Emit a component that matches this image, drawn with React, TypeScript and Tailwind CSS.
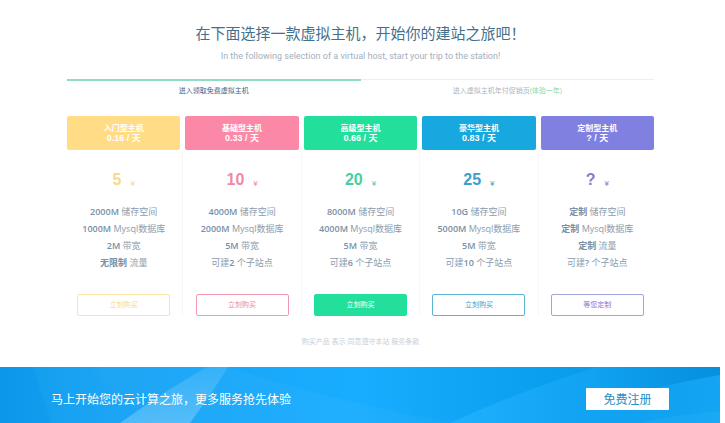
type Spec = [bold: string, text: string];

interface Plan {
  name: string;
  daily: string;
  price: string;
  specs: Spec[];
  action: string;
  head: string;
  ink: string;
  button: string;
}

const prefix = "可建";

const plans: Plan[] = [
  {
    name: "入门型主机",
    daily: "0.16 / 天",
    price: "5",
    specs: [["2000M", "储存空间"], ["1000M", "Mysql数据库"], ["2M", "带宽"], ["无限制", "流量"]],
    action: "立刻购买",
    head: "bg-[#ffdc85]",
    ink: "text-[#f8d98a]",
    button: "border-[#fbe3a2] text-[#f8d98a] bg-white",
  },
  {
    name: "基础型主机",
    daily: "0.33 / 天",
    price: "10",
    specs: [["4000M", "储存空间"], ["2000M", "Mysql数据库"], ["5M", "带宽"], ["2", "个子站点"]],
    action: "立刻购买",
    head: "bg-[#fc88a8]",
    ink: "text-[#f088a6]",
    button: "border-[#f29ab0] text-[#f088a0] bg-white",
  },
  {
    name: "高级型主机",
    daily: "0.66 / 天",
    price: "20",
    specs: [["8000M", "储存空间"], ["4000M", "Mysql数据库"], ["5M", "带宽"], ["6", "个子站点"]],
    action: "立刻购买",
    head: "bg-[#22e09c]",
    ink: "text-[#46d09c]",
    button: "border-[#22e09c] bg-[#22e09c] text-white",
  },
  {
    name: "豪华型主机",
    daily: "0.83 / 天",
    price: "25",
    specs: [["10G", "储存空间"], ["5000M", "Mysql数据库"], ["5M", "带宽"], ["10", "个子站点"]],
    action: "立刻购买",
    head: "bg-[#16a8de]",
    ink: "text-[#3c9fcb]",
    button: "border-[#5cb4d4] text-[#3c9fcb] bg-white",
  },
  {
    name: "定制型主机",
    daily: "? / 天",
    price: "?",
    specs: [["定制", "储存空间"], ["定制", "Mysql数据库"], ["定制", "流量"], ["?", "个子站点"]],
    action: "等您定制",
    head: "bg-[#7f80e0]",
    ink: "text-[#8080cc]",
    button: "border-[#a4a4dc] text-[#8274d4] bg-white",
  },
];

function PlanColumn({ plan, last }: { plan: Plan; last: boolean }) {
  return (
    <li className="flex flex-1 flex-col">
      <h2 className={`flex h-[34px] flex-col items-center justify-center rounded-[2px] text-[8px] leading-[10px] font-bold text-white ${plan.head}`}>
        <span>{plan.name}</span>
        <span className="font-['Liberation_Sans','Noto_Sans_CJK_SC',sans-serif] text-[9px]">{plan.daily}</span>
      </h2>
      <div className={`-mr-[3px] flex flex-col items-center border-r pr-[2px] ${last ? "border-transparent" : "border-[#f6f7f9]"}`}>
        <p className={`flex h-[53px] items-center gap-[9px] pt-[6px] font-['Liberation_Sans',sans-serif] ${plan.ink}`}>
          <strong className="text-[16px] leading-5 font-bold">{plan.price}</strong>
          <span className="pt-2 text-[8px] leading-[10px]">¥</span>
        </p>
        <ul className="text-center text-[9px] leading-[17px] text-[#8c9cac]">
          {plan.specs.map(([bold, text]) => (
            <li key={bold + text}>
              {text === "个子站点" && prefix}
              <b className="font-semibold text-[#7890a6]">{bold}</b> {text}
            </li>
          ))}
        </ul>
        <button type="button" className={`mt-[23px] h-[22px] w-[93px] rounded-[2px] border text-[7px] leading-[10px] ${plan.button}`}>
          {plan.action}
        </button>
      </div>
    </li>
  );
}

function Waves() {
  return (
    <svg className="absolute inset-0 h-full w-full" viewBox="0 0 720 56" preserveAspectRatio="none" aria-hidden="true">
      <defs>
        <linearGradient id="base" x1="0" x2="1" y1="0" y2="0">
          <stop offset="0" stopColor="#0b98ea" />
          <stop offset="0.15" stopColor="#17a3f4" />
          <stop offset="0.5" stopColor="#19adff" />
          <stop offset="0.75" stopColor="#0b9ff0" />
          <stop offset="1" stopColor="#0696e6" />
        </linearGradient>
        <linearGradient id="beam" x1="0" x2="0" y1="0" y2="1">
          <stop offset="0" stopColor="#fff" stopOpacity="0.1" />
          <stop offset="1" stopColor="#fff" stopOpacity="0.24" />
        </linearGradient>
        <linearGradient id="swell" x1="0" x2="1" y1="0" y2="0">
          <stop offset="0" stopColor="#22b2ff" stopOpacity="0.8" />
          <stop offset="1" stopColor="#12a2f2" stopOpacity="0.2" />
        </linearGradient>
        <linearGradient id="shade" x1="0" x2="1" y1="0" y2="0">
          <stop offset="0" stopColor="#0487d4" stopOpacity="0" />
          <stop offset="1" stopColor="#0487d4" stopOpacity="0.5" />
        </linearGradient>
        <linearGradient id="ridge" x1="0" x2="1" y1="0" y2="0">
          <stop offset="0" stopColor="#12a4f4" stopOpacity="0" />
          <stop offset="1" stopColor="#16a8f6" stopOpacity="0.8" />
        </linearGradient>
      </defs>
      <rect width="720" height="56" fill="url(#base)" />
      <path d="M32 0H90Q112 26 152 56H52Z" fill="#38b6f8" fillOpacity="0.15" />
      <path d="M90 0Q112 26 152 56H450Q320 30 228 0Z" fill="#fff" fillOpacity="0.03" />
      <path d="M120 56Q165 24 207 0H228Q212 26 190 56Z" fill="url(#beam)" />
      <path d="M450 56Q520 24 597 0H720V56Z" fill="url(#swell)" />
      <path d="M597 0H720V8Q660 18 590 38Z" fill="url(#shade)" />
      <path d="M540 56Q620 26 720 8V56Z" fill="url(#ridge)" />
      <path d="M640 56Q675 48 720 44V56Z" fill="#2ab2fa" fillOpacity="0.3" />
    </svg>
  );
}

export default function App() {
  return (
    <div className="bg-white pr-[5px] font-['Open_Sans','Noto_Sans_CJK_SC',sans-serif]" lang="zh-CN">
      <main className="flex flex-col pt-[21px] pr-[66px] pl-[67px]">
        <h1 className="text-center font-['Noto_Sans_CJK_SC',sans-serif] text-[15px] leading-6 font-normal text-[#45708c]">
          在下面选择一款虚拟主机，开始你的建站之旅吧！
        </h1>
        <p className="pt-1 text-center font-['Roboto',sans-serif] text-[9px] leading-[14px] text-[#a3b0be]">
          In the following selection of a virtual host, start your trip to the station!
        </p>
        <nav className="mt-4 flex text-center text-[7px] leading-[10px]">
          <a href="#free" className="flex-1 border-t-2 border-[#8fdcc0] pt-[5px] text-[#4a6484]">
            进入领取免费虚拟主机
          </a>
          <a href="#yearly" className="flex-1 border-t border-[#eceef0] pt-[6px] text-[#adb6c0]">
            进入虚拟主机年付促销页<span className="text-[#7fdcaa]">(体验一年)</span>
          </a>
        </nav>
        <ul className="mt-5 flex gap-[5px]">
          {plans.map((plan, i) => (
            <PlanColumn key={plan.name} plan={plan} last={i === plans.length - 1} />
          ))}
        </ul>
        <p className="pt-[21px] pb-5 text-center text-[7px] leading-[10px] text-[#c6cfd8]">
          购买产品 表示 同意遵守本站 服务条款
        </p>
      </main>
      <footer className="relative h-14 overflow-hidden">
        <Waves />
        <div className="relative flex h-full items-center justify-between pt-[7px] pr-[51px] pl-[51px] font-['Noto_Sans_CJK_SC',sans-serif] text-[12px] leading-4">
          <p className="text-white">马上开始您的云计算之旅，更多服务抢先体验</p>
          <button type="button" className="h-[22px] w-[83px] rounded-[1px] bg-white text-[#2490c8]">
            免费注册
          </button>
        </div>
      </footer>
    </div>
  );
}
